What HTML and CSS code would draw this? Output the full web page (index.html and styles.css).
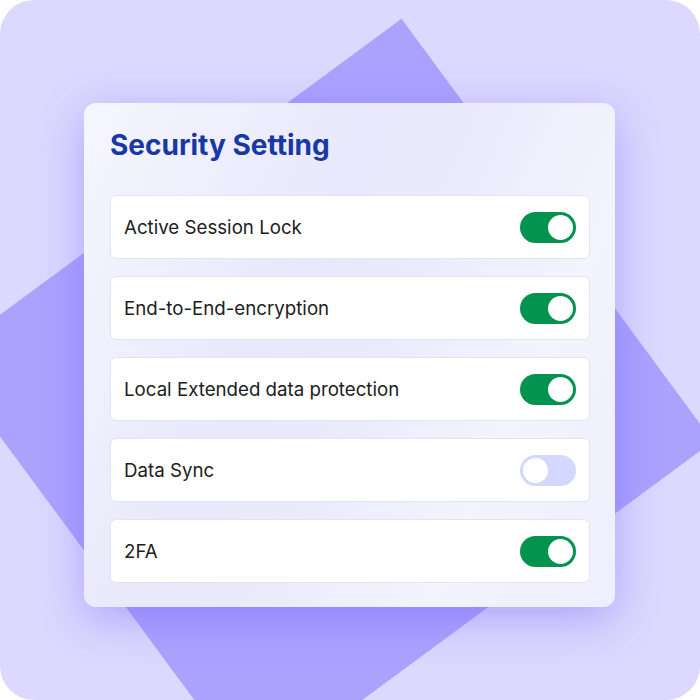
FILE: index.html
```html
<!DOCTYPE html>
<html>
<head>
<meta charset="utf-8">
<link rel="stylesheet" href="styles.css">
</head>
<body>
<div class="canvas">
  <div class="shape"></div>
  <div class="card">
    <h1 class="title">Security Setting</h1>
    <div class="list">
      <div class="row"><span class="label">Active Session Lock</span><span class="toggle on"><span class="knob"></span></span></div>
      <div class="row"><span class="label">End-to-End-encryption</span><span class="toggle on"><span class="knob"></span></span></div>
      <div class="row"><span class="label">Local Extended data protection</span><span class="toggle on"><span class="knob"></span></span></div>
      <div class="row"><span class="label">Data Sync</span><span class="toggle off"><span class="knob"></span></span></div>
      <div class="row"><span class="label">2FA</span><span class="toggle on"><span class="knob"></span></span></div>
    </div>
  </div>
</div>
</body>
</html>
```

FILE: styles.css
```css
html, body {
  margin: 0;
  padding: 0;
  background: #ffffff;
}

.canvas {
  position: relative;
  width: 700px;
  height: 700px;
  overflow: hidden;
  border-radius: 34px;
  background: #dcd8fe;
  box-sizing: border-box;
  padding: 103px 0 0 84px;
  font-family: Inter, "Liberation Sans", sans-serif;
}

.shape {
  position: absolute;
  left: 41.5px;
  top: 137px;
  width: 571px;
  height: 525px;
  background: #aba2fe;
  transform: rotate(-36.4deg);
}

.card {
  position: relative;
  width: 531px;
  height: 504px;
  box-sizing: border-box;
  padding: 26px 25px 24px 26px;
  border-radius: 12px;
  background: linear-gradient(115deg, #f6f6fe 0%, #e9e8fc 38%, #ebebfc 55%, #f4f4fe 75%, #eeeefd 100%);
  box-shadow: 0 12px 44px rgba(112, 92, 250, 0.42);
}

.title {
  margin: 0 0 34px 0;
  font-size: 28px;
  line-height: 32px;
  font-weight: 700;
  color: #1738a6;
  letter-spacing: 0;
}

.list {
  display: flex;
  flex-direction: column;
  gap: 17px;
}

.row {
  height: 64px;
  box-sizing: border-box;
  display: flex;
  align-items: center;
  justify-content: space-between;
  padding: 0 13px 0 13px;
  background: #ffffff;
  border: 1px solid #e4e4ee;
  border-radius: 6px;
}

.label {
  font-size: 18.7px;
  color: #202020;
}

.toggle {
  width: 56px;
  height: 31px;
  border-radius: 16px;
  box-sizing: border-box;
  display: flex;
  align-items: center;
  padding: 0 3px;
}

.toggle.on {
  background: #02934f;
  justify-content: flex-end;
}

.toggle.off {
  background: #d4d8fe;
  justify-content: flex-start;
}

.knob {
  width: 25px;
  height: 25px;
  border-radius: 50%;
  background: #ffffff;
}
```
